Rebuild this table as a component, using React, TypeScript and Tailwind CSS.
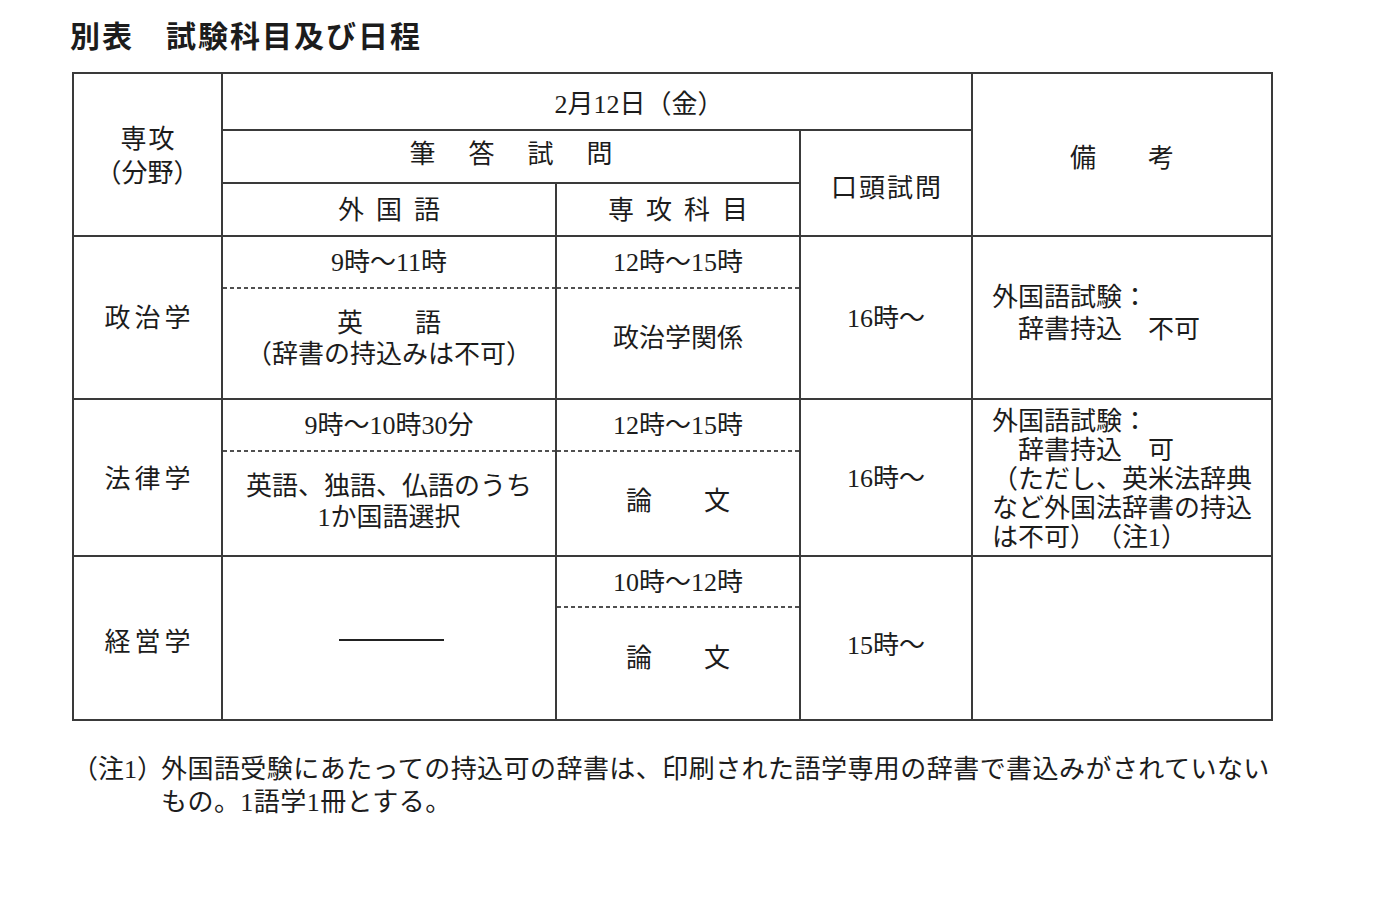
import React from "react";

const B = "border-r-2 border-b-2 border-[#3a3a3a]";

function Dash() {
  return (
    <div className="h-[2px] bg-[repeating-linear-gradient(to_right,#505050_0px,#505050_4px,transparent_4px,transparent_7px)]" />
  );
}

function TimeCell({
  time,
  timeH,
  contentH,
  children,
  contentClass = "",
}: {
  time: string;
  timeH: string;
  contentH: string;
  children: React.ReactNode;
  contentClass?: string;
}) {
  return (
    <td className={`${B} p-0 align-top`}>
      <div className={`${timeH} flex items-center justify-center pt-[1px]`}>{time}</div>
      <Dash />
      <div className={`${contentH} flex flex-col items-center justify-center leading-[31px] ${contentClass}`}>
        {children}
      </div>
    </td>
  );
}

export default function App() {
  return (
    <div className="w-[1400px] h-[902px] bg-white text-[#1c1c1c] font-['Liberation_Serif','Noto_Sans_CJK_JP',serif] [text-spacing-trim:space-all]">
      <div className="h-[72px] pl-[70px] pt-[14px]">
        <h1 className="font-['Noto_Sans_CJK_JP',sans-serif] font-bold text-[30px] leading-[40px] tracking-[2px]">
          別表　試験科目及び日程
        </h1>
      </div>

      <table className="ml-[72px] table-fixed border-separate border-spacing-0 border-t-2 border-l-2 border-[#3a3a3a] w-[1201px] text-[26px] leading-[31px]">
        <colgroup>
          <col className="w-[149px]" />
          <col className="w-[334px]" />
          <col className="w-[244px]" />
          <col className="w-[172px]" />
          <col className="w-[300px]" />
        </colgroup>
        <tbody>
          <tr>
            <td rowSpan={3} className={`${B} p-0 text-center align-middle leading-[34px]`}>
              <div className="pt-[4px]">
                <div className="tracking-[2px] pl-[2px]">専攻</div>
                <div>（分野）</div>
              </div>
            </td>
            <td colSpan={3} className={`${B} h-[57px] p-0 align-middle`}>
              <div className="flex justify-center pl-[84px] pt-[5px]">2月12日（金）</div>
            </td>
            <td rowSpan={3} className={`${B} p-0 align-middle text-center`}>
              <div className="pt-[8px]">備　　考</div>
            </td>
          </tr>
          <tr>
            <td colSpan={2} className={`${B} h-[53px] p-0 align-middle`}>
              <div className="flex justify-center gap-[33px] pb-[4px]">
                <span>筆</span>
                <span>答</span>
                <span>試</span>
                <span>問</span>
              </div>
            </td>
            <td rowSpan={2} className={`${B} p-0 align-middle text-center`}>
              <div className="tracking-[2px] pl-[2px] pt-[10px]">口頭試問</div>
            </td>
          </tr>
          <tr>
            <td className={`${B} h-[53px] p-0 align-middle`}>
              <div className="flex justify-center gap-[12px] pt-[2px]">
                <span>外</span>
                <span>国</span>
                <span>語</span>
              </div>
            </td>
            <td className={`${B} h-[53px] p-0 align-middle`}>
              <div className="flex justify-center gap-[12px] pt-[2px]">
                <span>専</span>
                <span>攻</span>
                <span>科</span>
                <span>目</span>
              </div>
            </td>
          </tr>

          {/* 政治学 */}
          <tr>
            <td className={`${B} h-[163px] p-0 align-middle text-center`}>
              <div className="tracking-[4px] pl-[4px] pt-[2px]">政治学</div>
            </td>
            <TimeCell time="9時～11時" timeH="h-[50px]" contentH="h-[109px]" contentClass="pb-[10px]">
              <div>英　　語</div>
              <div>（辞書の持込みは不可）</div>
            </TimeCell>
            <TimeCell time="12時～15時" timeH="h-[50px]" contentH="h-[109px]" contentClass="pb-[10px]">
              <div>政治学関係</div>
            </TimeCell>
            <td className={`${B} p-0 align-middle text-center`}>
              <div className="pt-[2px]">16時～</div>
            </td>
            <td className={`${B} p-0 align-top pt-[45px] pl-[19px] leading-[32px]`}>
              <div>外国語試験：</div>
              <div>　辞書持込　不可</div>
            </td>
          </tr>

          {/* 法律学 */}
          <tr>
            <td className={`${B} h-[157px] p-0 align-middle text-center`}>
              <div className="tracking-[4px] pl-[4px] pt-[3px]">法律学</div>
            </td>
            <TimeCell time="9時～10時30分" timeH="h-[50px]" contentH="h-[103px]" contentClass="pb-[4px]">
              <div>英語、独語、仏語のうち</div>
              <div>1か国語選択</div>
            </TimeCell>
            <TimeCell time="12時～15時" timeH="h-[50px]" contentH="h-[103px]" contentClass="pb-[4px]">
              <div>論　　文</div>
            </TimeCell>
            <td className={`${B} p-0 align-middle text-center`}>
              <div className="pt-[2px]">16時～</div>
            </td>
            <td className={`${B} p-0 align-top pt-[7px] pl-[19px] leading-[29px]`}>
              <div>外国語試験：</div>
              <div>　辞書持込　可</div>
              <div>（ただし、英米法辞典</div>
              <div>など外国法辞書の持込</div>
              <div>は不可）（注1）</div>
            </td>
          </tr>

          {/* 経営学 */}
          <tr>
            <td className={`${B} h-[164px] p-0 align-middle text-center`}>
              <div className="tracking-[4px] pl-[4px] pt-[9px]">経営学</div>
            </td>
            <td className={`${B} p-0 align-middle`}>
              <div className="w-[105px] h-[2px] bg-[#222] ml-[116px] mt-[3px]" />
            </td>
            <TimeCell time="10時～12時" timeH="h-[49px]" contentH="h-[111px]" contentClass="pb-[10px]">
              <div>論　　文</div>
            </TimeCell>
            <td className={`${B} p-0 align-middle text-center`}>
              <div className="pt-[15px]">15時～</div>
            </td>
            <td className={`${B} p-0`} />
          </tr>
        </tbody>
      </table>

      <div className="mt-[32px] pl-[72px] flex text-[26px] leading-[33px] whitespace-nowrap">
        <div className="w-[89px] shrink-0">（注1）</div>
        <div className="tracking-[0.45px]">
          外国語受験にあたっての持込可の辞書は、印刷された語学専用の辞書で書込みがされていない
          <br />
          もの。1語学1冊とする。
        </div>
      </div>
    </div>
  );
}
